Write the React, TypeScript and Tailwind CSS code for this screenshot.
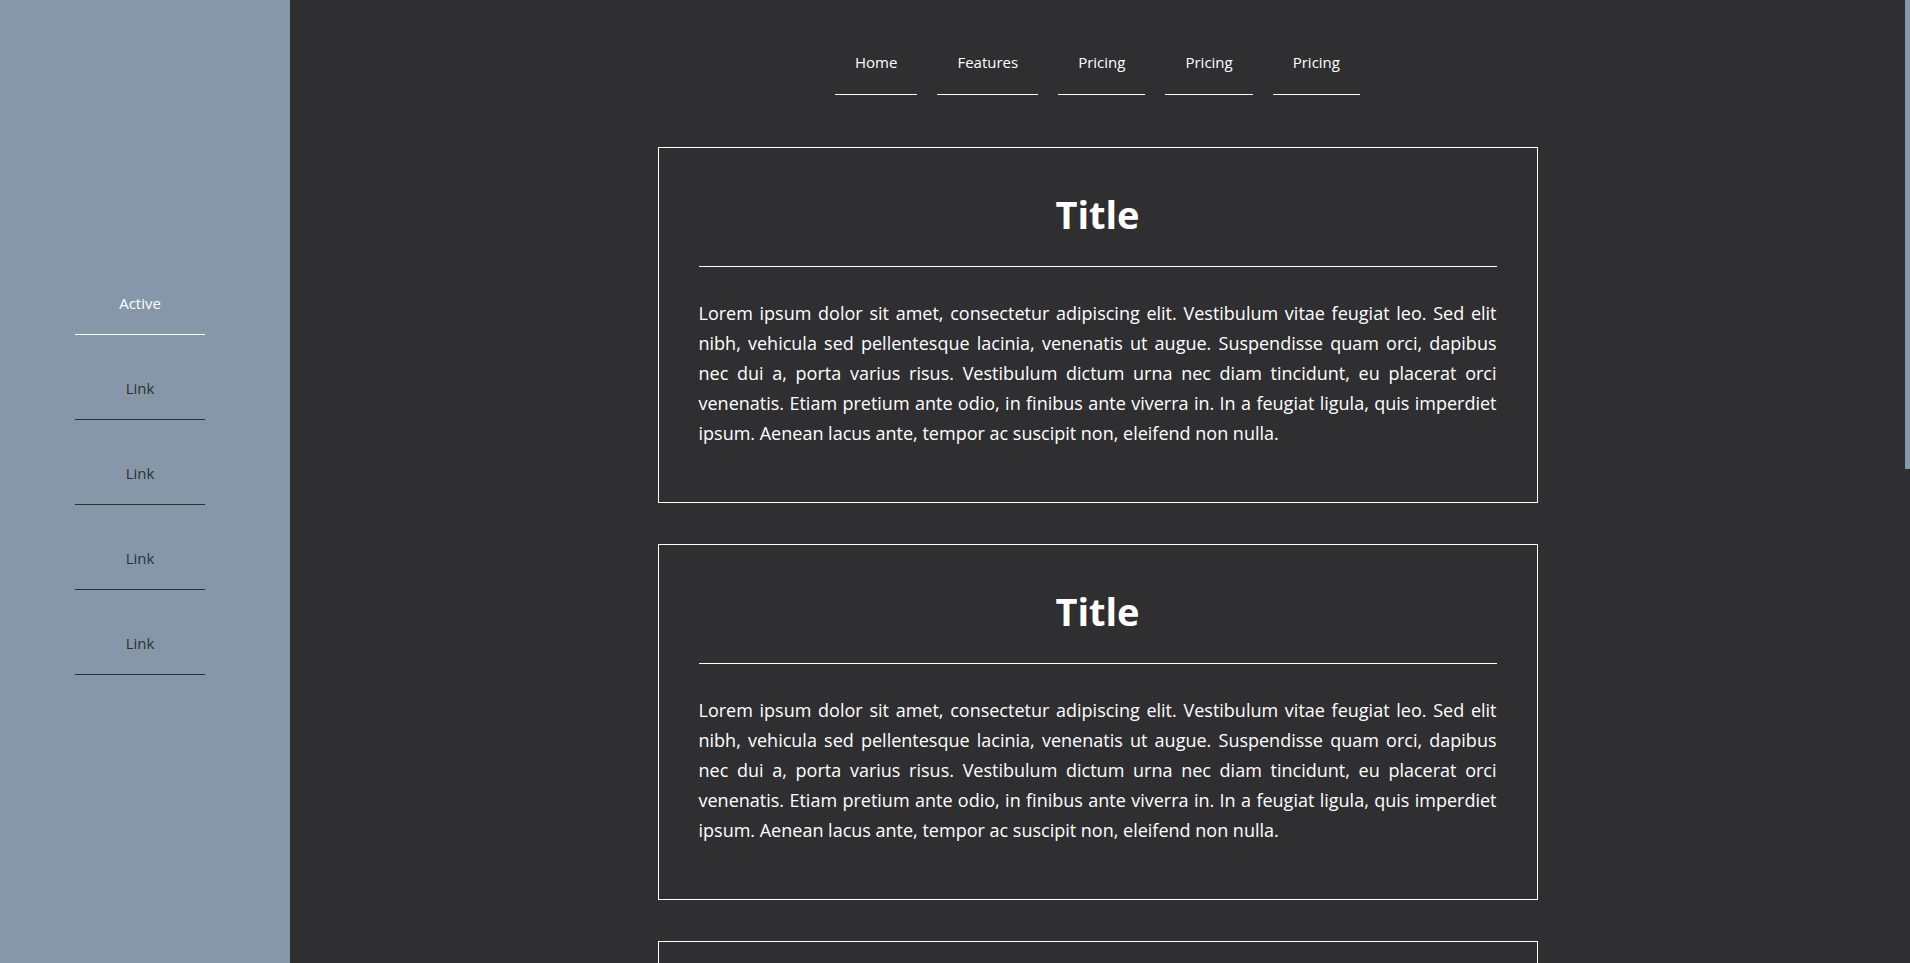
const navItems = ["Home", "Features", "Pricing", "Pricing", "Pricing"];
const sideItems = ["Active", "Link", "Link", "Link", "Link"];

const lines = [
  "Lorem ipsum dolor sit amet, consectetur adipiscing elit. Vestibulum vitae feugiat leo. Sed elit",
  "nibh, vehicula sed pellentesque lacinia, venenatis ut augue. Suspendisse quam orci, dapibus",
  "nec dui a, porta varius risus. Vestibulum dictum urna nec diam tincidunt, eu placerat orci",
  "venenatis. Etiam pretium ante odio, in finibus ante viverra in. In a feugiat ligula, quis imperdiet",
  "ipsum. Aenean lacus ante, tempor ac suscipit non, eleifend non nulla.",
];

const Card = () => (
  <div className="border border-white px-[40px] pt-[42px] pb-[54px]">
    <h2 className="text-center text-[38px] leading-[48px] font-bold text-white">Title</h2>
    <hr className="mt-[28px] border-0 border-t border-white" />
    <p className="mt-[31px] text-[18px] leading-[30px] text-white">
      {lines.map((line, i) => (
        <span
          key={i}
          className={
            i < lines.length - 1
              ? "block whitespace-nowrap text-justify [text-align-last:justify]"
              : "block text-left"
          }
        >
          {line}
        </span>
      ))}
    </p>
  </div>
);

export default function App() {
  return (
    <div className="flex h-screen w-full overflow-hidden bg-[#2f2f31] font-['Open_Sans',sans-serif]">
      <aside className="w-[290px] shrink-0 bg-[#8597a8] pt-[250px] pl-[75px]">
        <ul className="w-[130px]">
          {sideItems.map((item, i) => (
            <li
              key={i}
              className={
                i === 0
                  ? "pt-[43px] pb-[21px] border-b border-white text-center text-[15px] leading-[20px] text-white"
                  : "pt-[43px] pb-[21px] border-b border-[#2f2f31] text-center text-[15px] leading-[20px] text-[#2f2f31]"
              }
            >
              {item}
            </li>
          ))}
        </ul>
      </aside>

      <div className="relative flex-1">
        <main className="h-full overflow-hidden pt-[32px] pr-[5px]">
          <nav>
            <ul className="flex justify-center gap-[20px]">
              {navItems.map((item, i) => (
                <li
                  key={i}
                  className="px-[20px] pt-[20px] pb-[22px] border-b border-white text-[15px] leading-[20px] text-white"
                >
                  {item}
                </li>
              ))}
            </ul>
          </nav>

          <div className="mx-auto mt-[52px] flex w-[880px] flex-col gap-[41px]">
            <Card />
            <Card />
            <Card />
          </div>
        </main>
        {/* scrollbar thumb */}
        <div className="absolute top-0 right-0 h-[469px] w-[5px] bg-[#8597a8]" />
      </div>
    </div>
  );
}
